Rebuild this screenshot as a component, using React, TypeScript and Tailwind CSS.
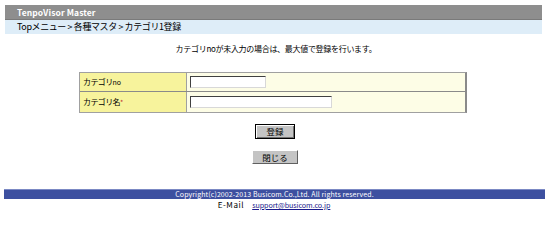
import React from "react";

const font = "font-['MS_PGothic','Noto_Sans_CJK_JP',sans-serif]";

export default function App() {
  return (
    <div className={`w-[550px] h-[217px] bg-white ${font} text-black overflow-hidden`}>
      {/* Header */}
      <div className="pt-[5px] pl-[5px] pr-[8px]">
        <div className="h-[15px] bg-[#8e8e8e] border-b border-[#7a7a7a] pl-[12px] flex items-center">
          <span className="text-[8.5px] font-bold text-white tracking-[0.1px]">TenpoVisor Master</span>
        </div>
        <div className="h-[14px] bg-[#deedf8] pl-[12px] flex items-center">
          <span className="text-[9px] tracking-[-0.4px] whitespace-pre">Topメニュー &gt; 各種マスタ &gt; カテゴリ1登録</span>
        </div>
      </div>

      {/* Message */}
      <div className="mt-[9px] text-center text-[8px] tracking-[-0.3px] leading-[12px] pl-[2px]">
        カテゴリnoが未入力の場合は、最大値で登録を行います。
      </div>

      {/* Form table */}
      <div className="mt-[17px] ml-[79px] w-[388px] border border-[#a0a0a0] border-r-2 border-r-[#8a8a8a]">
        <div className="flex h-[19px] border-b border-[#8a8a8a]">
          <div className="w-[107px] bg-[#f7f39c] border-r border-[#a0a0a0] pl-[3px] flex items-center text-[8px] tracking-[-0.6px]">
            カテゴリ<span className="text-[7px] tracking-[-0.2px]">no</span>
          </div>
          <div className="flex-1 bg-[#fdfde6] pl-[3px] flex items-center">
            <div className="w-[76px] h-[12px] bg-white border border-t-[#404040] border-l-[#404040] border-r-[#d8d8d8] border-b-[#d8d8d8]" />
          </div>
        </div>
        <div className="flex h-[20px]">
          <div className="w-[107px] bg-[#f7f39c] border-r border-[#a0a0a0] pl-[3px] flex items-center text-[8px] tracking-[-0.6px]">
            カテゴリ名<span className="text-[#c03030] text-[7px]">*</span>
          </div>
          <div className="flex-1 bg-[#fdfde6] pl-[3px] flex items-center">
            <div className="w-[142px] h-[12px] bg-white border border-t-[#404040] border-l-[#404040] border-r-[#d8d8d8] border-b-[#d8d8d8]" />
          </div>
        </div>
      </div>

      {/* Buttons */}
      <div className="flex flex-col items-center">
        <button className="mt-[11px] w-[40px] h-[15px] bg-[#c4c4c4] border border-black shadow-[inset_1px_1px_0_#ffffff,inset_-1px_-1px_0_#707070] text-[8.5px] leading-none flex items-center justify-center">
          登録
        </button>
        <button className="mt-[11px] w-[46px] h-[14px] bg-[#c4c4c4] border border-t-white border-l-white border-r-[#606060] border-b-[#606060] text-[8.5px] leading-none flex items-center justify-center">
          閉じる
        </button>
      </div>

      {/* Footer */}
      <div className="mt-[25px] ml-[4px] mr-[5px] h-[10px] bg-[#3d50a0] border-t border-[#7b89c4] flex items-center justify-center">
        <span className="text-[7px] text-white tracking-[0.1px] leading-none">
          Copyright(c)2002-2013 Busicom.Co.,Ltd. All rights reserved.
        </span>
      </div>
      <div className="flex justify-center text-[8px] leading-[12px] pr-[2px]">
        <span className="tracking-[0.6px]">E-Mail</span>
        <a href="#" className="ml-[8px] text-[7.2px] tracking-[-0.1px] text-[#1a1a8c] underline">support@busicom.co.jp</a>
      </div>
    </div>
  );
}
